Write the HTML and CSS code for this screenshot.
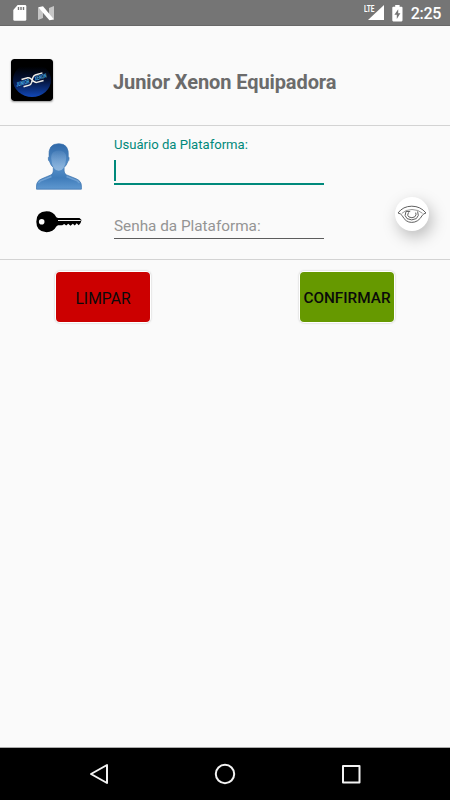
FILE: index.html
```
<!DOCTYPE html>
<html lang="pt-BR">
<head>
  <meta charset="UTF-8">
  <meta name="viewport" content="width=device-width, initial-scale=1.0">
  <title>Junior Xenon Equipadora</title>
  <link rel="stylesheet" href="styles.css">
</head>
<body>
  <div class="status">
    <svg class="sd" width="14" height="16" viewBox="0 0 14 16">
      <path d="M4.6 0H12Q13.3 0 13.3 1.3V14.4Q13.3 15.8 12 15.8H1.7Q.3 15.8 .3 14.4V5Z" fill="#fff"/>
      <path d="M5.5 2V5M8 2V5M10.5 2V5" stroke="#757575" stroke-width="1.4"/>
    </svg>
    <svg class="nougat" width="17" height="15" viewBox="0 0 17 15">
      <path d="M0 1.2 5 5V12L0 14ZM11 2 16 0V13.5L11 10Z" fill="#c6c6c6"/>
      <path d="M.2 1.2 5 .3 16 13.5 11.4 14.3Z" fill="#fff"/>
    </svg>
    <svg class="signal" width="21" height="17" viewBox="0 0 21 17">
      <path d="M20 1V16H4Z" fill="#fff"/>
      <path d="M0 0H11V9H0Z" fill="#757575"/>
      <text x="0" y="8" textLength="10.5" lengthAdjust="spacingAndGlyphs">LTE</text>
    </svg>
    <svg class="battery" width="11" height="17" viewBox="0 0 11 17">
      <path d="M3.2 0H7.6V1.7H9.5Q10.5 1.7 10.5 2.7V15.3Q10.5 16.4 9.5 16.4H1.3Q.3 16.4 .3 15.3V2.7Q.3 1.7 1.3 1.7H3.2Z" fill="#fff"/>
      <path d="M6.2 4.2 2.4 9.8H4.8V14L8.4 8.3H6.2Z" fill="#757575"/>
    </svg>
    <span class="clock">2:25</span>
  </div>

  <header>
    <svg class="logo" width="42" height="42" viewBox="0 0 42 42">
      <defs>
        <linearGradient id="night" x1="0" y1="0" x2="0" y2="1">
          <stop offset=".1" stop-color="#000"/>
          <stop offset=".5" stop-color="#041238"/>
          <stop offset="1" stop-color="#1148b8"/>
        </linearGradient>
      </defs>
      <rect width="42" height="42" rx="3" fill="#000"/>
      <ellipse cx="21" cy="21" rx="19" ry="17" fill="url(#night)"/>
      <g transform="rotate(-16 21 21)">
        <text x="4.5" y="23.4" textLength="13.5" lengthAdjust="spacingAndGlyphs">JUNIOR</text>
        <text x="24" y="22.6" textLength="12" lengthAdjust="spacingAndGlyphs">XENON</text>
        <path d="M11 17.7H17.5Q19 17.7 20 19.2L22 22.5Q23.5 24.6 25 24.6H32M11 25.2H17Q18.7 25.2 20 23.2L22.3 19.2Q23.7 17 25.5 17H33" fill="none" stroke="#f0eee8" stroke-width="1.5"/>
      </g>
    </svg>
    <h1>Junior Xenon Equipadora</h1>
  </header>

  <form>
    <svg class="user" width="46" height="47" viewBox="0 0 46 47">
      <defs>
        <linearGradient id="blue" x1="0" y1="0" x2="0" y2="1">
          <stop offset="0" stop-color="#2f68a8"/>
          <stop offset=".5" stop-color="#5790c9"/>
          <stop offset=".75" stop-color="#3f7cba"/>
          <stop offset="1" stop-color="#5f98d0"/>
        </linearGradient>
        <linearGradient id="shine" x1="0" y1="0" x2="0" y2="1">
          <stop offset="0" stop-color="#a9c8e8" stop-opacity=".1"/>
          <stop offset="1" stop-color="#a9c8e8" stop-opacity=".7"/>
        </linearGradient>
      </defs>
      <path d="M.5 46.2V43Q.6 37.8 6 35.7L15 31.9Q17.3 30.7 17.3 28V24.5Q14.5 22 13.7 18.8Q12 18 12.3 14.5L13.1 13.9Q11.7 .7 22.8 .7Q33.5 .7 32.2 13.9L33.1 14.5Q33.2 18.1 31.7 18.8Q30.8 22 28.1 24.5V28Q28.1 30.7 30.6 31.9L40 35.7Q45.3 37.8 45.4 43V46.2Z" fill="url(#blue)" stroke="#3971ae" stroke-width=".7"/>
      <path d="M15.2 15Q15 10.5 18 8.7Q22.7 6.3 27.5 8.7Q30.4 10.7 30.2 15Q29.2 27.7 22.7 27.7Q16.1 27.7 15.2 15Z" fill="url(#shine)"/>
      <path d="M2.4 40Q4 37.5 8 36.5L15.5 33.5M43.5 40Q42 37.5 38 36.5L30.5 33.5" fill="none" stroke="#6d9fd2" stroke-width="1.5"/>
    </svg>
    <div class="field active">
      <label for="usuario">Usuário da Plataforma:</label>
      <div class="line" id="usuario"><span class="cursor"></span></div>
    </div>

    <svg class="key" width="46" height="22" viewBox="0 0 46 22">
      <path d="M10.5 .3Q17.3 .3 20.3 6.2L22 7H43.5L45.5 9 44.6 12 42.7 14.3 40.7 12.3 38.8 14.6 36.8 12.7 34.5 14.7 32.3 12.8 30.2 14.6 28.2 13.1 26.3 14.3H22L20.3 15.6Q17.3 21.3 10.5 21.3Q.3 21 .3 10.8Q.3 .5 10.5 .3Z"/>
      <circle cx="5.7" cy="10.8" r="2.8" fill="#fafafa"/>
      <path d="M22 9.5H44.7" stroke="#eee" stroke-width="1"/>
    </svg>
    <div class="field senha">
      <div class="line">Senha da Plataforma:</div>
    </div>
    <button type="button" class="eye" aria-label="Mostrar senha">
      <svg width="30" height="20" viewBox="0 0 30 20" fill="none" stroke="#606060" stroke-width="1">
        <path d="M1 9Q6 2.2 14.8 2.2Q23.5 2.2 29 9Q26.7 9.5 25.3 11.3Q21.4 18.4 14.7 18.4Q8.5 18.4 5.2 11.6Q3.8 9.6 1 9Z"/>
        <path d="M4.8 9.4Q8.5 5.6 15 5.5Q21.5 5.6 25.5 9.3" stroke="#999"/>
        <path d="M9 7.4Q6.7 12 10 14.6Q14.7 17.2 19.3 14.6Q22.7 12 20.6 7.4M11.5 8.4Q9.5 11.7 12 13Q15 14.6 17.8 12.8Q19.8 11 18.7 8.6M9 7.4 13.2 7.6"/>
      </svg>
    </button>
  </form>

  <div class="buttons">
    <button type="button" class="limpar">LIMPAR</button>
    <button type="button" class="confirmar">CONFIRMAR</button>
  </div>

  <nav>
    <svg width="20" height="22" viewBox="0 0 20 22"><path d="M18 2V20L2 11Z"/></svg>
    <svg width="22" height="22" viewBox="0 0 22 22"><circle cx="11" cy="11" r="9.2"/></svg>
    <svg width="20" height="20" viewBox="0 0 20 20"><rect x="2" y="2" width="16.5" height="16.5"/></svg>
  </nav>
</body>
</html>
```
FILE: styles.css
```
* {
  box-sizing: border-box;
}

body {
  margin: 0;
  height: 800px;
  display: flex;
  flex-direction: column;
  overflow: hidden;
  background-color: #fafafa;
  font-family: Roboto, sans-serif;
}

svg {
  display: block;
  flex: none;
}

.status {
  height: 26px;
  flex: none;
  display: flex;
  align-items: flex-start;
  padding: 5px 9px 0 13px;
  background-color: #757575;
  border-bottom: 1px solid #686868;
  color: #fff;
}

.nougat {
  margin: 1px 0 0 11px;
}

.signal {
  margin-left: auto;
  margin-top: -1px;
}

.signal text {
  font-size: 9px;
  font-weight: bold;
  fill: #fff;
}

.battery {
  margin-left: 7px;
}

.clock {
  margin-left: 8px;
  font-size: 16px;
  font-weight: 500;
  line-height: 18px;
  letter-spacing: -0.3px;
}

header {
  height: 100px;
  flex: none;
  display: flex;
  align-items: flex-start;
  padding: 33px 0 0 11px;
  border-bottom: 1px solid #d3d3d3;
}

.logo {
  border-radius: 3px;
  box-shadow: 0 1px 2px rgba(0, 0, 0, 0.4);
}

.logo text {
  font-size: 6px;
  font-weight: bold;
  font-style: italic;
  fill: #4db2ea;
}

h1 {
  margin: 11px 0 0 60px;
  font-size: 20px;
  line-height: 24px;
  font-weight: bold;
  letter-spacing: -0.09px;
  color: #6b6b6b;
}

form {
  height: 134px;
  flex: none;
  display: grid;
  grid-template-columns: 78px 210px 1fr;
  grid-template-rows: 60px 73px;
  padding-left: 36px;
  border-bottom: 1px solid #d3d3d3;
}

.user {
  margin-top: 17px;
}

.key {
  grid-column: 1;
  margin-top: 25px;
}

.field {
  grid-column: 2;
}

label {
  display: block;
  padding-top: 11px;
  font-size: 13.1px;
  line-height: 16px;
  color: #00897b;
}

.active .line {
  height: 32px;
  padding-top: 7px;
  border-bottom: 2px solid #00897b;
}

.cursor {
  display: block;
  width: 2px;
  height: 21px;
  background-color: #00897b;
}

.senha .line {
  height: 53px;
  padding-top: 30px;
  border-bottom: 1px solid #5c5c5c;
  font-size: 15.3px;
  line-height: 20px;
  color: #949494;
}

button {
  border: none;
  padding: 0;
  font-family: inherit;
  cursor: pointer;
}

.eye {
  width: 34px;
  height: 34px;
  margin: 11px 0 0 71px;
  border-radius: 50%;
  display: flex;
  justify-content: center;
  align-items: center;
  background-color: #fff;
  box-shadow: 3px 6px 16px rgba(0, 0, 0, 0.26);
}

.buttons {
  flex: 1;
  display: flex;
  justify-content: space-between;
  align-items: flex-start;
  padding: 12px 56px 0;
}

.buttons button {
  width: 94px;
  height: 50px;
  padding-top: 2px;
  border-radius: 4px;
  box-shadow: 0 0 0 1px #fff, 0 0 2px 1px rgba(0, 0, 0, 0.25);
  font-size: 15.3px;
  font-weight: 500;
  color: #0a0a0a;
}

.buttons .limpar {
  background-color: #cc0000;
  font-weight: 400;
  font-size: 15.7px;
}

.buttons .confirmar {
  background-color: #669900;
}

nav {
  height: 53px;
  flex: none;
  display: flex;
  justify-content: space-between;
  align-items: center;
  padding: 0 89px;
  background-color: #000;
  border-top: 1px solid #aaa;
}

nav svg {
  fill: none;
  stroke: #f2f2f2;
  stroke-width: 2;
  stroke-linejoin: round;
}
```
